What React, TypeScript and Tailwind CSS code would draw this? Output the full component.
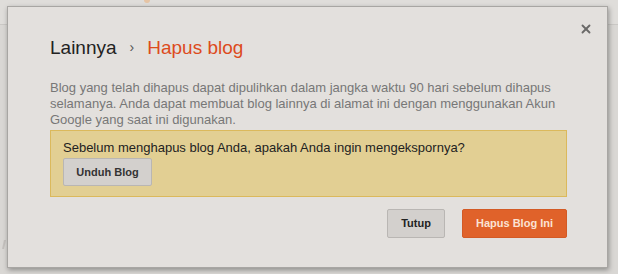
import { X } from 'lucide-react';

export default function App() {
  return (
    <div className="relative w-[618px] h-[274px] overflow-hidden bg-[#d9d7d4] font-['Liberation_Sans',Arial,sans-serif]">
      {/* page behind the modal */}
      <div className="absolute left-0 right-0 top-0 h-[25px] bg-[#dfddda] border-b border-[#cac8c5]" />
      <div className="absolute left-[144px] top-0 w-[6px] h-[3px] rounded-b-full bg-[#e6c4a4]" />
      <div className="absolute left-[3px] top-[240px] w-[2px] h-[9px] -skew-x-12 bg-[#c4c1be]" />

      {/* Dialog */}
      <div className="relative ml-[7px] mt-[6px] w-[601px] h-[262px] bg-[#e3e0dd] border border-[#a8a6a3] shadow-[1px_2px_5px_rgba(0,0,0,0.35)] pl-[42px] pr-[40px] pt-[30px]">
        <button className="absolute right-[14px] top-[15px] text-[#6a6968]">
          <X size={14} strokeWidth={3.2} />
        </button>

        <h1 className="flex items-center text-[19px] leading-[21px] text-[#222]">
          <span>Lainnya</span>
          <span className="mx-[13px] text-[14px] text-[#555]">›</span>
          <span className="text-[#dd4b1c]">Hapus blog</span>
        </h1>

        <p className="mt-[22px] text-[13px] leading-[16px] text-[#777]">
          Blog yang telah dihapus dapat dipulihkan dalam jangka waktu 90 hari sebelum dihapus
          selamanya. Anda dapat membuat blog lainnya di alamat ini dengan menggunakan Akun
          Google yang saat ini digunakan.
        </p>

        <div className="mt-[2px] bg-[#e2cf93] border border-[#dbb95c] pl-[12px] pt-[9px] pb-[10px]">
          <p className="text-[13px] leading-[16px] text-[#222]">
            Sebelum menghapus blog Anda, apakah Anda ingin mengekspornya?
          </p>
          <button className="mt-[2px] w-[89px] h-[28px] rounded-[2px] bg-[#d3d0cd] border border-[#b9b6b3] text-[11px] font-bold text-[#333]">
            Unduh Blog
          </button>
        </div>

        <div className="mt-[12px] flex justify-end gap-[17px]">
          <button className="w-[58px] h-[29px] rounded-[2px] bg-[#d3d0cd] border border-[#b9b6b3] text-[11px] font-bold text-[#222]">
            Tutup
          </button>
          <button className="w-[105px] h-[29px] rounded-[2px] bg-[#e0622a] border border-[#d35a25] text-[11px] font-bold text-[#fbe3d4]">
            Hapus Blog Ini
          </button>
        </div>
      </div>
    </div>
  );
}
